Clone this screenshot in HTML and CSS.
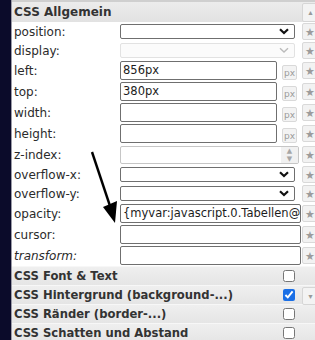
FILE: index.html
```html
<!DOCTYPE html>
<html lang="de">
<head>
    <meta charset="UTF-8">
    <title>CSS Eigenschaften</title>
    <link rel="stylesheet" href="styles.css">
</head>
<body>
<div class="page">
    <div class="strip"></div>
    <div class="panel">
        <div class="group-head">
            <span class="group-title">CSS Allgemein</span>
            <button class="side-btn up">&#9650;</button>
        </div>

        <div class="row row-sel">
            <label>position:</label>
            <div class="select"><svg width="10" height="7" viewBox="0 0 10 7"><path d="M1 1.2 L5 5 L9 1.2" fill="none" stroke="#111" stroke-width="2.2"/></svg></div>
            <button class="star">&#9733;</button>
        </div>
        <div class="row row-sel">
            <label>display:</label>
            <div class="select disabled"><svg width="10" height="7" viewBox="0 0 10 7"><path d="M1 1.2 L5 5 L9 1.2" fill="none" stroke="#bbb" stroke-width="1.4"/></svg></div>
            <button class="star">&#9733;</button>
        </div>
        <div class="row">
            <label>left:</label>
            <div class="input short">856px</div>
            <button class="unit">px</button>
            <button class="star">&#9733;</button>
        </div>
        <div class="row">
            <label>top:</label>
            <div class="input short">380px</div>
            <button class="unit">px</button>
            <button class="star">&#9733;</button>
        </div>
        <div class="row">
            <label>width:</label>
            <div class="input short"></div>
            <button class="unit">px</button>
            <button class="star">&#9733;</button>
        </div>
        <div class="row">
            <label>height:</label>
            <div class="input short"></div>
            <button class="unit">px</button>
            <button class="star">&#9733;</button>
        </div>
        <div class="row">
            <label>z-index:</label>
            <div class="input number">
                <span class="spin"><i>&#9650;</i><i>&#9660;</i></span>
            </div>
            <button class="star">&#9733;</button>
        </div>
        <div class="row row-sel">
            <label>overflow-x:</label>
            <div class="select"><svg width="10" height="7" viewBox="0 0 10 7"><path d="M1 1.2 L5 5 L9 1.2" fill="none" stroke="#111" stroke-width="2.2"/></svg></div>
            <button class="star">&#9733;</button>
        </div>
        <div class="row row-sel">
            <label>overflow-y:</label>
            <div class="select"><svg width="10" height="7" viewBox="0 0 10 7"><path d="M1 1.2 L5 5 L9 1.2" fill="none" stroke="#111" stroke-width="2.2"/></svg></div>
            <button class="star">&#9733;</button>
        </div>
        <div class="row">
            <label>opacity:</label>
            <div class="input wide">{myvar:javascript.0.Tabellen@</div>
            <button class="star">&#9733;</button>
        </div>
        <div class="row">
            <label>cursor:</label>
            <div class="input wide"></div>
            <button class="star">&#9733;</button>
        </div>
        <div class="row">
            <label class="italic">transform:</label>
            <div class="input wide"></div>
            <button class="star">&#9733;</button>
        </div>

        <div class="section">
            <span class="section-title">CSS Font &amp; Text</span>
            <input type="checkbox">
        </div>
        <div class="section">
            <span class="section-title">CSS Hintergrund (background-...)</span>
            <input type="checkbox" checked>
            <button class="side-btn down">&#9660;</button>
        </div>
        <div class="section">
            <span class="section-title">CSS Ränder (border-...)</span>
            <input type="checkbox">
        </div>
        <div class="section">
            <span class="section-title">CSS Schatten und Abstand</span>
            <input type="checkbox">
        </div>
    </div>

    <!-- Hinweis-Pfeil auf das opacity Feld -->
    <svg class="arrow" width="130" height="230" viewBox="0 0 130 230">
        <line x1="92" y1="152" x2="110" y2="206" stroke="#000" stroke-width="2.4"/>
        <polygon points="103,207 117,201 115,223" fill="#000"/>
    </svg>
</div>
</body>
</html>
```

FILE: styles.css
```css
body {
    margin: 0;
    font-family: "DejaVu Sans", Verdana, sans-serif;
    font-size: 12px;
    color: #2b2b2b;
    background: #fff;
    overflow: hidden;
}
.page {
    position: relative;
    display: flex;
    width: 315px;
    height: 340px;
    overflow: hidden;
}
.strip {
    flex: none;
    width: 11px;
    background: #0b0b2a;
    border-right: 1px solid #9a9aa6;
}
.panel {
    flex: none;
    width: 330px;
    border-top: 2px solid #cfcfcf;
}
.group-head {
    display: flex;
    align-items: center;
    height: 20px;
    background: linear-gradient(#ececec, #e2e2e2);
}
.group-title, .section-title {
    font-weight: bold;
    padding-left: 2px;
    color: #333;
    font-size: 11.6px;
}
.group-title {
    width: 288px;
    font-size: 12px;
}
.section-title {
    width: 269px;
    white-space: nowrap;
}
.side-btn {
    flex: none;
    width: 18px;
    height: 19px;
    padding: 0 0 0 4px;
    border: 1px solid #d6d6d6;
    border-radius: 2px;
    background: #f3f3f3;
    color: #999;
    font-size: 7px;
    line-height: 17px;
    text-align: left;
}
.row {
    display: flex;
    align-items: center;
    height: 21px;
}
.row-sel {
    height: 19px;
}
.row label {
    flex: none;
    width: 106px;
    padding-left: 2px;
}
.italic {
    font-style: italic;
}
.select {
    flex: none;
    width: 175px;
    height: 15px;
    box-sizing: border-box;
    border: 1px solid #6f6f6f;
    border-radius: 2px;
    display: flex;
    align-items: center;
    justify-content: flex-end;
    padding-right: 5px;
    margin-right: 7px;
}
.select.disabled {
    border-color: #e2e2e2;
    background: #fbfbfb;
}
.input {
    flex: none;
    height: 19px;
    box-sizing: border-box;
    border: 1px solid #6f6f6f;
    border-radius: 2px;
    padding-left: 2px;
    line-height: 17px;
    white-space: nowrap;
    overflow: hidden;
    color: #1c1c1c;
    font-size: 11.5px;
}
.input.short {
    width: 157px;
    margin-right: 5px;
}
.input.number {
    width: 179px;
    height: 18px;
    margin-right: 3px;
    border-color: #c6c6c6;
    display: flex;
    justify-content: flex-end;
    padding: 0;
}
.input.wide {
    width: 181px;
    margin-right: 1px;
}
.spin {
    width: 17px;
    display: flex;
    flex-direction: column;
    background: #f1f1f1;
    color: #a6a6a6;
    font-size: 7px;
    line-height: 8px;
    text-align: center;
}
.spin i {
    font-style: normal;
}
.unit {
    flex: none;
    width: 15px;
    height: 15px;
    margin: 4px 5px 0 0;
    padding: 0;
    border: 1px solid #d9d9d9;
    border-radius: 2px;
    background: #f3f3f3;
    color: #9a9a9a;
    font-family: "DejaVu Sans", Verdana, sans-serif;
    font-size: 9px;
}
.star {
    flex: none;
    width: 18px;
    height: 17px;
    padding: 0 0 0 2px;
    border: 1px solid #d9d9d9;
    border-radius: 2px;
    background: #f2f2f2;
    color: #9c9c9c;
    font-size: 11px;
    text-align: left;
    line-height: 14px;
}
.section {
    display: flex;
    align-items: center;
    height: 18px;
    background: linear-gradient(#efefef, #e5e5e5);
    border-top: 1px solid #f7f7f7;
}
.section input {
    flex: none;
    width: 12px;
    height: 12px;
    margin: 0 7px 0 0;
    accent-color: #1a6fe6;
}
.section .side-btn {
    height: 18px;
    margin-top: 1px;
}
.arrow {
    position: absolute;
    left: 0;
    top: 0;
}
```
